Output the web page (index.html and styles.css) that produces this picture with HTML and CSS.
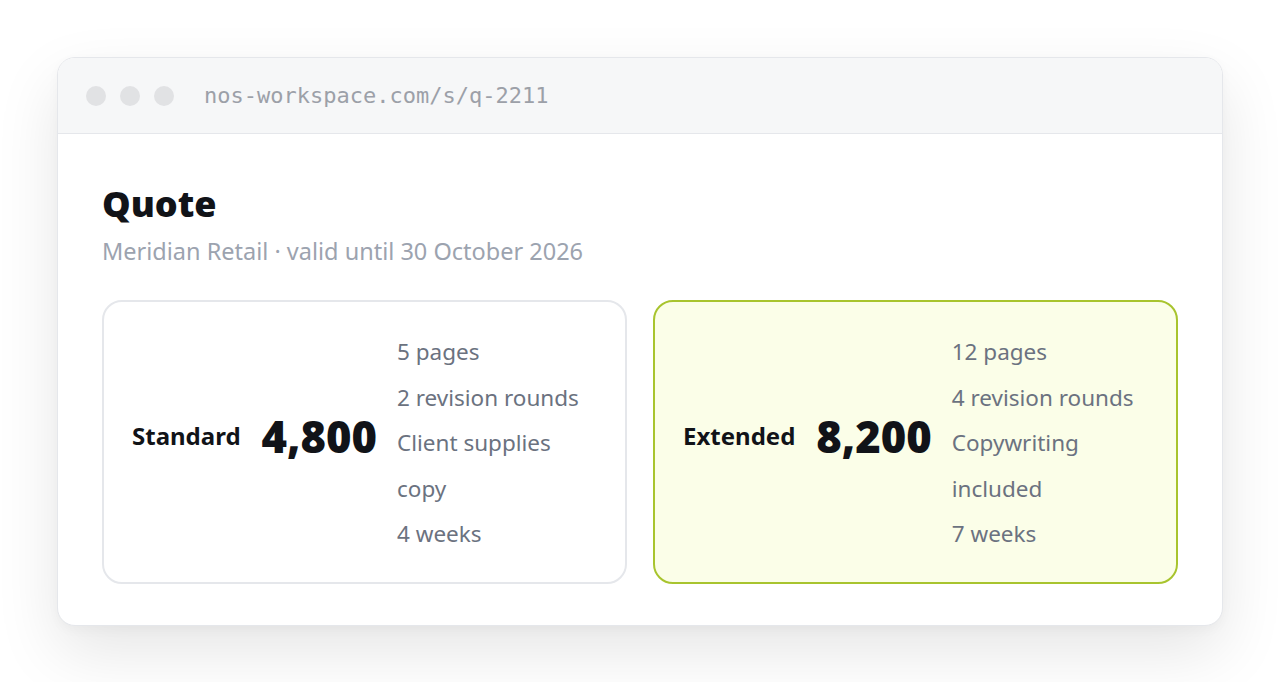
FILE: index.html
```html
<!DOCTYPE html>
<html lang="en">
<head>
<meta charset="utf-8">
<title>Quote</title>
<link rel="stylesheet" href="styles.css">
</head>
<body>
  <div class="window">
    <div class="titlebar">
      <div class="dots"><span class="dot"></span><span class="dot"></span><span class="dot"></span></div>
      <div class="url">nos-workspace.com/s/q-2211</div>
    </div>
    <div class="content">
      <h1 class="title">Quote</h1>
      <p class="subtitle">Meridian Retail · valid until 30 October 2026</p>
      <div class="plans">
        <div class="plan">
          <div class="plan-name">Standard</div>
          <div class="plan-price">4,800</div>
          <ul class="features">
            <li>5 pages</li>
            <li>2 revision rounds</li>
            <li>Client supplies copy</li>
            <li>4 weeks</li>
          </ul>
        </div>
        <div class="plan plan-featured">
          <div class="plan-name">Extended</div>
          <div class="plan-price">8,200</div>
          <ul class="features">
            <li>12 pages</li>
            <li>4 revision rounds</li>
            <li>Copywriting included</li>
            <li>7 weeks</li>
          </ul>
        </div>
      </div>
    </div>
  </div>
</body>
</html>
```

FILE: styles.css
```css
* { box-sizing: border-box; }

html, body {
  margin: 0;
  background: #ffffff;
}

body {
  padding: 57px;
  font-family: "Noto Sans", "Open Sans", sans-serif;
  color: #111318;
}

.window {
  border: 1px solid #e5e7eb;
  border-radius: 18px;
  background: #ffffff;
  overflow: hidden;
  box-shadow: 0 26px 64px rgba(0, 0, 0, 0.10), 0 4px 12px rgba(0, 0, 0, 0.03);
}

.titlebar {
  height: 76px;
  background: #f6f7f8;
  border-bottom: 1px solid #e5e7eb;
  display: flex;
  align-items: center;
  padding-left: 28px;
  gap: 30px;
}

.dots {
  display: flex;
  gap: 14px;
}

.dot {
  width: 20px;
  height: 20px;
  border-radius: 50%;
  background: #e1e2e4;
}

.url {
  font-family: "DejaVu Sans Mono", "Liberation Mono", monospace;
  font-size: 22px;
  color: #9ca0a8;
}

.content {
  padding: 48px 44px 41px;
}

.title {
  margin: 0;
  font-size: 36px;
  font-weight: 900;
  line-height: 44px;
  color: #111318;
}

.subtitle {
  margin: 10px 0 0;
  font-size: 23.5px;
  line-height: 30px;
  color: #9ca3af;
}

.plans {
  margin-top: 34px;
  display: grid;
  grid-template-columns: 1fr 1fr;
  gap: 26px;
}

.plan {
  display: flex;
  align-items: center;
  gap: 20px;
  padding: 27px 28px 25px 28px;
  border: 2px solid #e5e7eb;
  border-radius: 20px;
  background: #ffffff;
}

.plan-featured {
  background: #fbfee8;
  border-color: #a8c42e;
}

/* name and price sit a touch above the list's centre line */
.plan-name,
.plan-price {
  margin-bottom: 14px;
  color: #111318;
}

.plan-name {
  font-size: 24px;
  font-weight: 700;
}

.plan-price {
  margin-left: 1px;
  font-size: 43.5px;
  font-weight: 900;
}

.features {
  flex: 1;
  margin: 0;
  padding: 0;
  list-style: none;
  font-size: 22.5px;
  line-height: 45.5px;
  color: #6b7280;
}
```
